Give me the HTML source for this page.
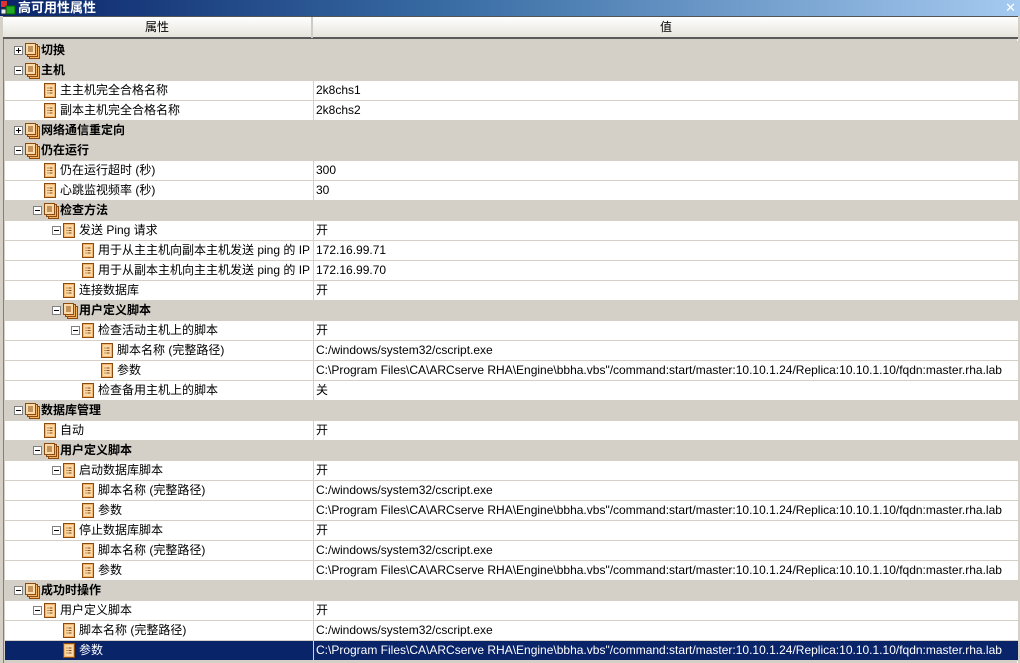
<!DOCTYPE html>
<html><head><meta charset="utf-8"><style>
*{margin:0;padding:0;box-sizing:border-box}
body{width:1020px;height:663px;overflow:hidden;background:#d4d0c8;font-family:"Liberation Sans","Noto Sans CJK SC",sans-serif;font-size:12px;color:#000;position:relative}
#title{position:absolute;left:0;top:0;width:1020px;height:16px;background:linear-gradient(90deg,#0a246a 0%,#3a6ea5 45%,#a6caf0 100%);color:#fff;font-weight:bold;font-size:13px;line-height:15px;padding-left:18px}
#title .x{position:absolute;right:4px;top:0;font-weight:normal;color:#fff;font-size:13px}
#hdr{position:absolute;left:3px;top:16px;width:1015px;height:23px;background:linear-gradient(#fff,#e6e4dc);border-top:1px solid #555;border-bottom:2px solid #5a5a5a}
#hdr div{position:absolute;top:0;height:21px;line-height:21px;text-align:center}
#body{position:absolute;left:3px;top:39px;width:1015px;height:624px;border-left:1px solid #808080;border-right:1px solid #fff;background:#d4d0c8}
.r{position:absolute;left:1px;width:1013px;height:20px;border-bottom:1px solid #d4d0c8;background:#fff}
.r.g{background:#d4d0c8;font-weight:bold;border-bottom-color:#d4d0c8}
.r.s{background:#0a246a;color:#fff}
.n{position:absolute;top:0;height:19px;line-height:19px;white-space:nowrap}
.v{position:absolute;left:308px;top:0;height:19px;line-height:19px;padding-left:2px;border-left:1px solid #d4d0c8;white-space:nowrap}
.e{position:absolute;top:5px;width:9px;height:9px;border:1px solid #808080;background:#fff;z-index:2}
.e:before{content:"";position:absolute;left:1px;top:3px;width:5px;height:1px;background:#000}
.e.p:after{content:"";position:absolute;left:3px;top:1px;width:1px;height:5px;background:#000}
.ic{position:absolute;top:2px}
</style></head><body>
<div id="title"><svg style="position:absolute;left:1px;top:1px" width="15" height="14"><rect x="0" y="0" width="6" height="6" fill="#d33"/><rect x="5" y="5" width="9" height="8" fill="#2a2" stroke="#060" /><rect x="0" y="8" width="5" height="5" fill="#eee" stroke="#333"/></svg>高可用性属性<span class="x">✕</span></div>
<div id="hdr"><div style="left:0;width:310px;border-right:2px solid #ccc">属性</div><div style="left:311px;width:704px">值</div></div>
<div id="body">
<svg width="0" height="0" style="position:absolute"><defs>
<g id="lf"><rect x="0.5" y="0.5" width="11" height="14" fill="#f5b56a" stroke="#8a4a10"/><rect x="2" y="2" width="8" height="11" fill="#fbd9a8"/><path d="M3.5 5h1M3.5 7.5h1M3.5 10h1M5.5 5h3M5.5 7.5h3M5.5 10h3" stroke="#8a4a10"/></g>
<g id="gp"><rect x="4.5" y="3.5" width="10" height="12" fill="#f5b56a" stroke="#8a4a10"/><rect x="2.5" y="1.5" width="10" height="12" fill="#f5b56a" stroke="#8a4a10"/><rect x="0.5" y="0.5" width="10" height="11" fill="#fbd9a8" stroke="#8a4a10"/><path d="M3 4h5M3 6h5M3 8h5" stroke="#8a4a10"/></g>
</defs></svg>
<div id="rows"></div>
</div>
<script>
var R=[
['g',0,'+','切换',''],['g',0,'-','主机',''],
['',1,'','主主机完全合格名称','2k8chs1'],['',1,'','副本主机完全合格名称','2k8chs2'],
['g',0,'+','网络通信重定向',''],['g',0,'-','仍在运行',''],
['',1,'','仍在运行超时 (秒)','300'],['',1,'','心跳监视频率 (秒)','30'],
['g',1,'-','检查方法',''],
['',2,'-','发送 Ping 请求','开'],
['',3,'','用于从主主机向副本主机发送 ping 的 IP','172.16.99.71'],
['',3,'','用于从副本主机向主主机发送 ping 的 IP','172.16.99.70'],
['',2,'','连接数据库','开'],
['g',2,'-','用户定义脚本',''],
['',3,'-','检查活动主机上的脚本','开'],
['',4,'','脚本名称 (完整路径)','C:/windows/system32/cscript.exe'],
['',4,'','参数','P'],
['',3,'','检查备用主机上的脚本','关'],
['g',0,'-','数据库管理',''],
['',1,'','自动','开'],
['g',1,'-','用户定义脚本',''],
['',2,'-','启动数据库脚本','开'],
['',3,'','脚本名称 (完整路径)','C:/windows/system32/cscript.exe'],
['',3,'','参数','P'],
['',2,'-','停止数据库脚本','开'],
['',3,'','脚本名称 (完整路径)','C:/windows/system32/cscript.exe'],
['',3,'','参数','P'],
['g',0,'-','成功时操作',''],
['',1,'-','用户定义脚本','开'],
['',2,'','脚本名称 (完整路径)','C:/windows/system32/cscript.exe'],
['s',2,'','参数','P']
];
var P='C:\\Program Files\\CA\\ARCserve RHA\\Engine\\bbha.vbs"/command:start/master:10.10.1.24/Replica:10.10.1.10/fqdn:master.rha.lab';
var h='';
R.forEach(function(r,i){
 var L=r[1],tx=36+19*L,ix=tx-16,ex=tx-27;
 var v=r[4]=='P'?P:r[4];
 h+='<div class="r '+r[0]+'" style="top:'+(2+20*i)+'px">';
 if(r[2])h+='<div class="e'+(r[2]=='+'?' p':'')+'" style="left:'+ex+'px"></div>';
 h+='<svg class="ic" style="left:'+ix+'px" width="16" height="16"><use href="#'+(r[0]=='g'?'gp':'lf')+'"/></svg>';
 h+='<div class="n" style="left:'+tx+'px">'+r[3]+'</div>';
 if(r[0]!='g')h+='<div class="v">'+v+'</div>';
 h+='</div>';
});
document.getElementById('rows').innerHTML=h;
</script>
</body></html>
